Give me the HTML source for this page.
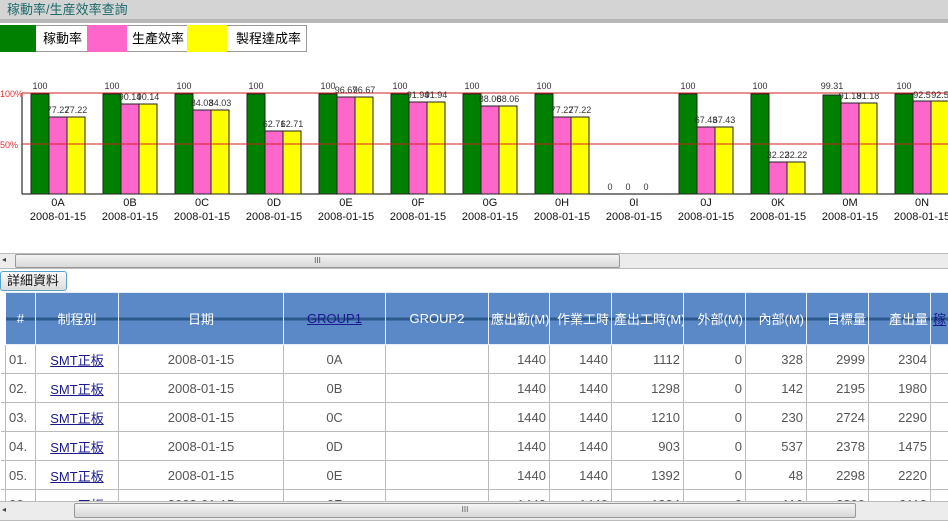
<!DOCTYPE html>
<html><head><meta charset="utf-8"><style>
*{margin:0;padding:0;box-sizing:border-box}
body{width:948px;height:521px;overflow:hidden;background:#fff;font-family:"Liberation Sans","Noto Sans CJK TC",sans-serif;position:relative}
.abs{position:absolute}
.title{left:0;top:0;width:948px;height:19px;background:#d4d4d4;color:#1c6a6a;font-size:13px;line-height:19px;padding-left:7px}
.bar2{left:0;top:19px;width:948px;height:4px;background:#b8b8b8}
.leg{top:25px;height:27px;font-size:13px;line-height:27px}
.sb{background:#ececec;border-top:1px solid #bbb;border-bottom:1px solid #bbb}
.thumb{background:linear-gradient(#f4f4f4,#d8d8d8);border:1px solid #999;border-radius:2px;text-align:center;font-size:8px;color:#555;line-height:12px}
table{position:absolute;left:0;top:292px;border-collapse:collapse;font-size:13px;color:#555;table-layout:fixed;width:990px}
td{border:1px solid #bbb;height:29px;padding:0 3px;white-space:nowrap;overflow:hidden}
th{background:#5b88c6;color:#fff;font-weight:normal;height:52px;border:1px solid #e8eef8;background-image:linear-gradient(#5b88c6 0,#5b88c6 24px,#2c5a8e 24px,#2c5a8e 27px,#5b88c6 27px);white-space:nowrap;overflow:hidden;padding:0 2px}
td.r{text-align:right}td.c{text-align:center}
a{color:#1a1a8c;text-decoration:underline}
</style></head><body>
<div class="abs title">稼動率/生産效率查詢</div>
<div class="abs bar2"></div>
<div class="abs" style="left:0;top:25px;width:307px;height:27px;border:1px solid #999;background:#fff"></div>
<div class="abs leg" style="left:0;width:36px;background:#008000"></div>
<div class="abs leg" style="left:43px;font-size:13px">稼動率</div>
<div class="abs leg" style="left:87px;width:40px;background:#ff66cc"></div>
<div class="abs leg" style="left:132px">生產效率</div>
<div class="abs leg" style="left:187px;width:40px;background:#ffff00"></div>
<div class="abs leg" style="left:236px">製程達成率</div>
<svg class="abs" style="left:0;top:0" width="948" height="240" font-family="Liberation Sans, sans-serif" font-size="10" fill="#333">
<line x1="22" y1="93" x2="22" y2="194" stroke="#000"/>
<line x1="22" y1="194" x2="948" y2="194" stroke="#000"/>
<g stroke="#222" stroke-width="1">
<g transform="translate(30,0)"><rect x="1" y="94" width="18" height="100" fill="#008000"/><rect x="19" y="117" width="18" height="77" fill="#ff66cc"/><rect x="37" y="117" width="18" height="77" fill="#ff0"/></g>
<g transform="translate(102,0)"><rect x="1" y="94" width="18" height="100" fill="#008000"/><rect x="19" y="104" width="18" height="90" fill="#ff66cc"/><rect x="37" y="104" width="18" height="90" fill="#ff0"/></g>
<g transform="translate(174,0)"><rect x="1" y="94" width="18" height="100" fill="#008000"/><rect x="19" y="110" width="18" height="84" fill="#ff66cc"/><rect x="37" y="110" width="18" height="84" fill="#ff0"/></g>
<g transform="translate(246,0)"><rect x="1" y="94" width="18" height="100" fill="#008000"/><rect x="19" y="131" width="18" height="63" fill="#ff66cc"/><rect x="37" y="131" width="18" height="63" fill="#ff0"/></g>
<g transform="translate(318,0)"><rect x="1" y="94" width="18" height="100" fill="#008000"/><rect x="19" y="97" width="18" height="97" fill="#ff66cc"/><rect x="37" y="97" width="18" height="97" fill="#ff0"/></g>
<g transform="translate(390,0)"><rect x="1" y="94" width="18" height="100" fill="#008000"/><rect x="19" y="102" width="18" height="92" fill="#ff66cc"/><rect x="37" y="102" width="18" height="92" fill="#ff0"/></g>
<g transform="translate(462,0)"><rect x="1" y="94" width="18" height="100" fill="#008000"/><rect x="19" y="106" width="18" height="88" fill="#ff66cc"/><rect x="37" y="106" width="18" height="88" fill="#ff0"/></g>
<g transform="translate(534,0)"><rect x="1" y="94" width="18" height="100" fill="#008000"/><rect x="19" y="117" width="18" height="77" fill="#ff66cc"/><rect x="37" y="117" width="18" height="77" fill="#ff0"/></g>
<g transform="translate(678,0)"><rect x="1" y="94" width="18" height="100" fill="#008000"/><rect x="19" y="127" width="18" height="67" fill="#ff66cc"/><rect x="37" y="127" width="18" height="67" fill="#ff0"/></g>
<g transform="translate(750,0)"><rect x="1" y="94" width="18" height="100" fill="#008000"/><rect x="19" y="162" width="18" height="32" fill="#ff66cc"/><rect x="37" y="162" width="18" height="32" fill="#ff0"/></g>
<g transform="translate(822,0)"><rect x="1" y="95" width="18" height="99" fill="#008000"/><rect x="19" y="103" width="18" height="91" fill="#ff66cc"/><rect x="37" y="103" width="18" height="91" fill="#ff0"/></g>
<g transform="translate(894,0)"><rect x="1" y="94" width="18" height="100" fill="#008000"/><rect x="19" y="101" width="18" height="93" fill="#ff66cc"/><rect x="37" y="101" width="18" height="93" fill="#ff0"/></g>
</g>
<line x1="22" y1="93" x2="948" y2="93" stroke="#d02020"/>
<line x1="22" y1="144" x2="948" y2="144" stroke="#d02020"/>
<text x="0" y="97" fill="#e03030" font-size="9">100%</text>
<text x="0" y="148" fill="#e03030" font-size="9">50%</text>
<g font-size="9" text-anchor="middle">
<text x="40" y="89">100</text><text x="58" y="113">77.22</text><text x="76" y="113">77.22</text>
<text x="112" y="89">100</text><text x="130" y="100">90.14</text><text x="148" y="100">90.14</text>
<text x="184" y="89">100</text><text x="202" y="106">84.03</text><text x="220" y="106">84.03</text>
<text x="256" y="89">100</text><text x="274" y="127">62.71</text><text x="292" y="127">62.71</text>
<text x="328" y="89">100</text><text x="346" y="93">96.67</text><text x="364" y="93">96.67</text>
<text x="400" y="89">100</text><text x="418" y="98">91.94</text><text x="436" y="98">91.94</text>
<text x="472" y="89">100</text><text x="490" y="102">88.06</text><text x="508" y="102">88.06</text>
<text x="544" y="89">100</text><text x="562" y="113">77.22</text><text x="580" y="113">77.22</text>
<text x="610" y="190">0</text><text x="628" y="190">0</text><text x="646" y="190">0</text>
<text x="688" y="89">100</text><text x="706" y="123">67.43</text><text x="724" y="123">67.43</text>
<text x="760" y="89">100</text><text x="778" y="158">32.22</text><text x="796" y="158">32.22</text>
<text x="832" y="89">99.31</text><text x="850" y="99">91.18</text><text x="868" y="99">91.18</text>
<text x="904" y="89">100</text><text x="922" y="98">92.5</text><text x="940" y="98">92.5</text>
</g>
<g font-size="11" text-anchor="middle" fill="#111">
<text x="58" y="206">0A</text><text x="58" y="220">2008-01-15</text>
<text x="130" y="206">0B</text><text x="130" y="220">2008-01-15</text>
<text x="202" y="206">0C</text><text x="202" y="220">2008-01-15</text>
<text x="274" y="206">0D</text><text x="274" y="220">2008-01-15</text>
<text x="346" y="206">0E</text><text x="346" y="220">2008-01-15</text>
<text x="418" y="206">0F</text><text x="418" y="220">2008-01-15</text>
<text x="490" y="206">0G</text><text x="490" y="220">2008-01-15</text>
<text x="562" y="206">0H</text><text x="562" y="220">2008-01-15</text>
<text x="634" y="206">0I</text><text x="634" y="220">2008-01-15</text>
<text x="706" y="206">0J</text><text x="706" y="220">2008-01-15</text>
<text x="778" y="206">0K</text><text x="778" y="220">2008-01-15</text>
<text x="850" y="206">0M</text><text x="850" y="220">2008-01-15</text>
<text x="922" y="206">0N</text><text x="922" y="220">2008-01-15</text>
</g>
</svg>
<div class="abs sb" style="left:0;top:253px;width:948px;height:16px"></div>
<div class="abs" style="left:2px;top:255px;font-size:8px;color:#444">◂</div>
<div class="abs thumb" style="left:15px;top:254px;width:605px;height:14px">III</div>
<div class="abs" style="left:0;top:271px;width:67px;height:20px;border:1px solid #5aa0c8;border-radius:3px;background:linear-gradient(#fafafa,#dcdcdc);font-size:13px;line-height:18px;padding-left:6px;color:#111">詳細資料</div>
<table>
<colgroup><col style="width:5px"><col style="width:30px"><col style="width:83px"><col style="width:165px"><col style="width:102px"><col style="width:103px"><col style="width:61px"><col style="width:62px"><col style="width:72px"><col style="width:62px"><col style="width:61px"><col style="width:62px"><col style="width:62px"><col style="width:60px"></colgroup>
<tr><th style="background:#fff;border-color:#fff"></th><th>#</th><th>制程別</th><th>日期</th><th><a>GROUP1</a></th><th>GROUP2</th><th style="text-align:right">應出勤(M)</th><th style="text-align:right">作業工時</th><th style="text-align:right">產出工時(M)</th><th style="text-align:right">外部(M)</th><th style="text-align:right">內部(M)</th><th style="text-align:right">目標量</th><th style="text-align:right">產出量</th><th style="text-align:left"><a>稼</a></th></tr>
<tr><td style="border-left:none"></td><td>01.</td><td class="c"><a>SMT正板</a></td><td class="c">2008-01-15</td><td class="c">0A</td><td></td><td class="r">1440</td><td class="r">1440</td><td class="r">1112</td><td class="r">0</td><td class="r">328</td><td class="r">2999</td><td class="r">2304</td><td></td></tr>
<tr><td style="border-left:none"></td><td>02.</td><td class="c"><a>SMT正板</a></td><td class="c">2008-01-15</td><td class="c">0B</td><td></td><td class="r">1440</td><td class="r">1440</td><td class="r">1298</td><td class="r">0</td><td class="r">142</td><td class="r">2195</td><td class="r">1980</td><td></td></tr>
<tr><td style="border-left:none"></td><td>03.</td><td class="c"><a>SMT正板</a></td><td class="c">2008-01-15</td><td class="c">0C</td><td></td><td class="r">1440</td><td class="r">1440</td><td class="r">1210</td><td class="r">0</td><td class="r">230</td><td class="r">2724</td><td class="r">2290</td><td></td></tr>
<tr><td style="border-left:none"></td><td>04.</td><td class="c"><a>SMT正板</a></td><td class="c">2008-01-15</td><td class="c">0D</td><td></td><td class="r">1440</td><td class="r">1440</td><td class="r">903</td><td class="r">0</td><td class="r">537</td><td class="r">2378</td><td class="r">1475</td><td></td></tr>
<tr><td style="border-left:none"></td><td>05.</td><td class="c"><a>SMT正板</a></td><td class="c">2008-01-15</td><td class="c">0E</td><td></td><td class="r">1440</td><td class="r">1440</td><td class="r">1392</td><td class="r">0</td><td class="r">48</td><td class="r">2298</td><td class="r">2220</td><td></td></tr>
<tr><td style="border-left:none"></td><td>06.</td><td class="c"><a>SMT正板</a></td><td class="c">2008-01-15</td><td class="c">0F</td><td></td><td class="r">1440</td><td class="r">1440</td><td class="r">1324</td><td class="r">0</td><td class="r">116</td><td class="r">2300</td><td class="r">2112</td><td></td></tr>
</table>
<div class="abs sb" style="left:0;top:501px;width:948px;height:20px"></div>
<div class="abs" style="left:2px;top:505px;font-size:8px;color:#444">◂</div>
<div class="abs thumb" style="left:74px;top:503px;width:782px;height:15px">III</div>
</body></html>
